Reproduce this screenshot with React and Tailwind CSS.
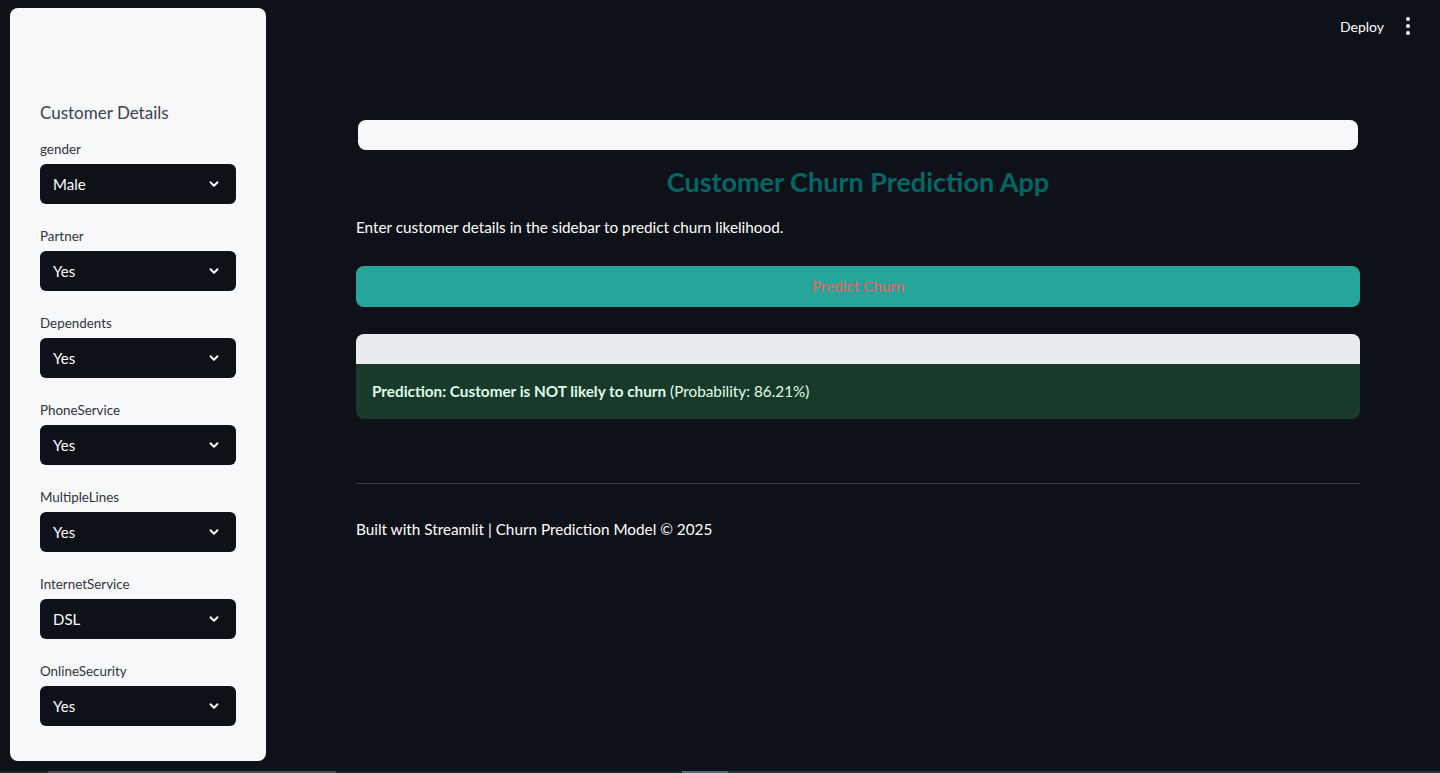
import React from "react";

const font = { fontFamily: "Lato, 'Noto Sans', sans-serif" };

function Chevron() {
  return (
    <svg width="14" height="14" viewBox="0 0 24 24" fill="none" stroke="white" strokeWidth="3.2" strokeLinecap="round" strokeLinejoin="round">
      <path d="M6 9l6 6 6-6" />
    </svg>
  );
}

function Field({ label, value }) {
  return (
    <div className="flex flex-col">
      <div className="text-[13.4px] leading-[20px] text-[#31333f] mb-[5px]">{label}</div>
      <div className="h-[40px] w-[196px] bg-[#0e1117] rounded-[6px] flex items-center justify-between pl-[13px] pr-[15px]">
        <span className="text-white text-[15px]">{value}</span>
        <Chevron />
      </div>
    </div>
  );
}

export default function App() {
  const fields = [
    ["gender", "Male"],
    ["Partner", "Yes"],
    ["Dependents", "Yes"],
    ["PhoneService", "Yes"],
    ["MultipleLines", "Yes"],
    ["InternetService", "DSL"],
    ["OnlineSecurity", "Yes"],
  ];
  return (
    <div className="w-[1440px] h-[773px] bg-[#0e1117] flex flex-col overflow-hidden" style={font}>
      <div className="flex flex-1 min-h-0">
        <aside className="w-[256px] ml-[10px] mt-[8px] mb-[10px] bg-[#f8f9fb] rounded-[8px] pl-[30px] pt-[92px] flex flex-col">
          <div className="text-[17px] leading-[26px] text-[#3d4150] mb-[13px]">Customer Details</div>
          <div className="flex flex-col gap-[22px]">
            {fields.map(([l, v]) => (
              <Field key={l} label={l} value={v} />
            ))}
          </div>
        </aside>
        <main className="flex-1 flex flex-col relative">
          <div className="flex justify-end items-center h-[52px] pr-[30px] gap-[22px]">
            <span className="text-white text-[14px]">Deploy</span>
            <div className="flex flex-col gap-[3px] items-center">
              <span className="w-[4px] h-[4px] rounded-full bg-white" />
              <span className="w-[4px] h-[4px] rounded-full bg-white" />
              <span className="w-[4px] h-[4px] rounded-full bg-white" />
            </div>
          </div>
          <div className="ml-[90px] w-[1004px] flex flex-col pt-[68px]">
            <div className="mx-[2px] h-[30px] bg-[#f8f9fb] rounded-[8px]" />
            <h1 className="text-center text-[27px] font-bold text-[#006666] mt-[14px] leading-[36px]">Customer Churn Prediction App</h1>
            <p className="text-white text-[15.3px] mt-[15px] leading-[24px]">Enter customer details in the sidebar to predict churn likelihood.</p>
            <div className="mt-[27px] h-[41px] bg-[#26a69a] rounded-[8px] flex items-center justify-center text-[15.3px] text-[#f06060]">Predict Churn</div>
            <div className="mt-[27px] h-[30px] bg-[#e9ecef] rounded-t-[8px]" />
            <div className="h-[55px] bg-[#193a2a] rounded-b-[8px] flex items-center px-[16px] text-[15.3px] text-[#dffde9]">
              <span className="font-bold">Prediction: Customer is NOT likely to churn</span>
              <span>&nbsp;(Probability: 86.21%)</span>
            </div>
            <div className="mt-[64px] h-px bg-[#3a3d45]" />
            <p className="text-white text-[15.3px] mt-[33px] leading-[24px]">Built with Streamlit | Churn Prediction Model © 2025</p>
          </div>
        </main>
      </div>
      <div className="h-[2px] flex">
        <div className="w-[48px] bg-[#2a2420]" />
        <div className="w-[288px] bg-[#4a4a4a]" />
        <div className="w-[346px] bg-[#1a2030]" />
        <div className="w-[46px] bg-[#5a6478]" />
        <div className="flex-1 bg-[#2b3038]" />
      </div>
    </div>
  );
}
